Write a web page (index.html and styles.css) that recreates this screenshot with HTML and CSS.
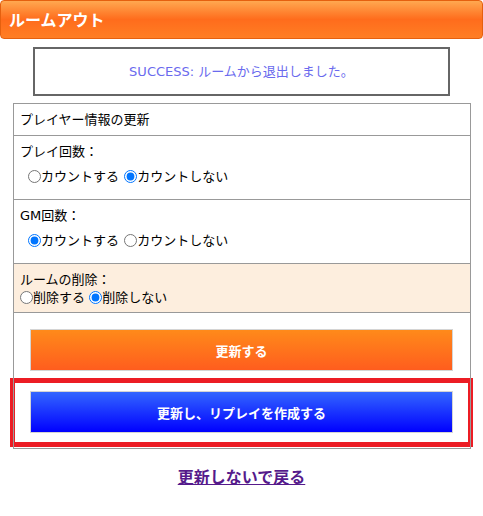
FILE: index.html
```html
<!DOCTYPE html>
<html lang="ja">
<head>
    <meta charset="UTF-8">
    <meta name="viewport" content="width=device-width, initial-scale=1.0">
    <title>ルームアウト</title>
    <link rel="stylesheet" href="styles.css">
</head>
<body>
    <h1 class="page-title">ルームアウト</h1>

    <div class="message">SUCCESS: ルームから退出しました。</div>

    <form class="update-form">
        <table class="form-table">
            <tr>
                <td class="cell">プレイヤー情報の更新</td>
            </tr>
            <tr>
                <td class="cell">
                    <div>プレイ回数：</div>
                    <div class="choices">
                        <label><input type="radio" name="play_count" value="1">カウントする</label>
                        <label><input type="radio" name="play_count" value="0" checked>カウントしない</label>
                    </div>
                </td>
            </tr>
            <tr>
                <td class="cell">
                    <div>GM回数：</div>
                    <div class="choices">
                        <label><input type="radio" name="gm_count" value="1" checked>カウントする</label>
                        <label><input type="radio" name="gm_count" value="0">カウントしない</label>
                    </div>
                </td>
            </tr>
            <tr>
                <td class="cell cell-warn">
                    <div>ルームの削除：</div>
                    <div>
                        <label><input type="radio" name="delete_room" value="1">削除する</label>
                        <label><input type="radio" name="delete_room" value="0" checked>削除しない</label>
                    </div>
                </td>
            </tr>
            <tr>
                <td class="cell cell-buttons">
                    <button type="submit" class="btn btn-orange">更新する</button>
                    <div class="highlight">
                        <button type="submit" class="btn btn-blue">更新し、リプレイを作成する</button>
                    </div>
                </td>
            </tr>
        </table>
    </form>

    <p class="back"><a href="#" class="back-link">更新しないで戻る</a></p>
</body>
</html>
```

FILE: styles.css
```css
/* 全体 */
body {
    margin: 0;
    font-family: "DejaVu Sans", "Noto Sans CJK JP", sans-serif;
    font-size: 13px;
    line-height: 18px;
    color: #000000;
    background: #ffffff;
}

/* 見出し */
.page-title {
    margin: 0;
    height: 37px;
    padding-left: 8px;
    font-family: "Noto Sans CJK JP", sans-serif;
    font-size: 16px;
    font-weight: bold;
    line-height: 37px;
    color: #ffffff;
    background: linear-gradient(#ffa850 0%, #ff6c1c 50%, #ff7e24 100%);
    border: 1px solid #e5600f;
    border-radius: 4px;
}

/* メッセージ */
.message {
    margin: 8px 0 0 33px;
    width: 413px;
    height: 45px;
    line-height: 45px;
    text-align: center;
    color: #6a6aee;
    border: 2px solid #666666;
}

/* フォーム */
.update-form {
    margin: 7px 0 0 13px;
}

.form-table {
    width: 458px;
    border-collapse: collapse;
    border: 1px solid #999999;
}

.cell {
    padding: 7px 6px 6px;
    border: 1px solid #999999;
    vertical-align: top;
}

.choices {
    margin: 7px 0 7px 8px;
}

.choices label {
    margin-right: 1px;
}

input[type="radio"] {
    width: 13px;
    height: 13px;
    margin: 0 0 0 0;
    vertical-align: -2px;
}

.cell-warn {
    padding-bottom: 5px;
    background: #fdeede;
}

.cell-buttons {
    padding: 16px 0 1px;
}

/* ボタン */
.btn {
    display: block;
    width: 423px;
    height: 42px;
    font-family: "Noto Sans CJK JP", sans-serif;
    font-size: 13px;
    font-weight: bold;
    color: #ffffff;
    border: 1px solid #d4d4d4;
    cursor: pointer;
}

.btn-orange {
    margin: 0 0 0 16px;
    background: linear-gradient(#ff8a1a, #ff5d1e);
}

.btn-blue {
    margin: 0;
    background: linear-gradient(#3366ff, #0000ff);
}

.highlight {
    margin: 7px -3px 0 -4px;
    padding: 8px 15px 9px;
    border: 5px solid #ec1c24;
}

/* 戻るリンク */
.back {
    margin: 18px 0 0;
    text-align: center;
}

.back-link {
    font-family: "Noto Sans CJK JP", sans-serif;
    font-size: 16px;
    font-weight: bold;
    color: #551a8b;
}
```
